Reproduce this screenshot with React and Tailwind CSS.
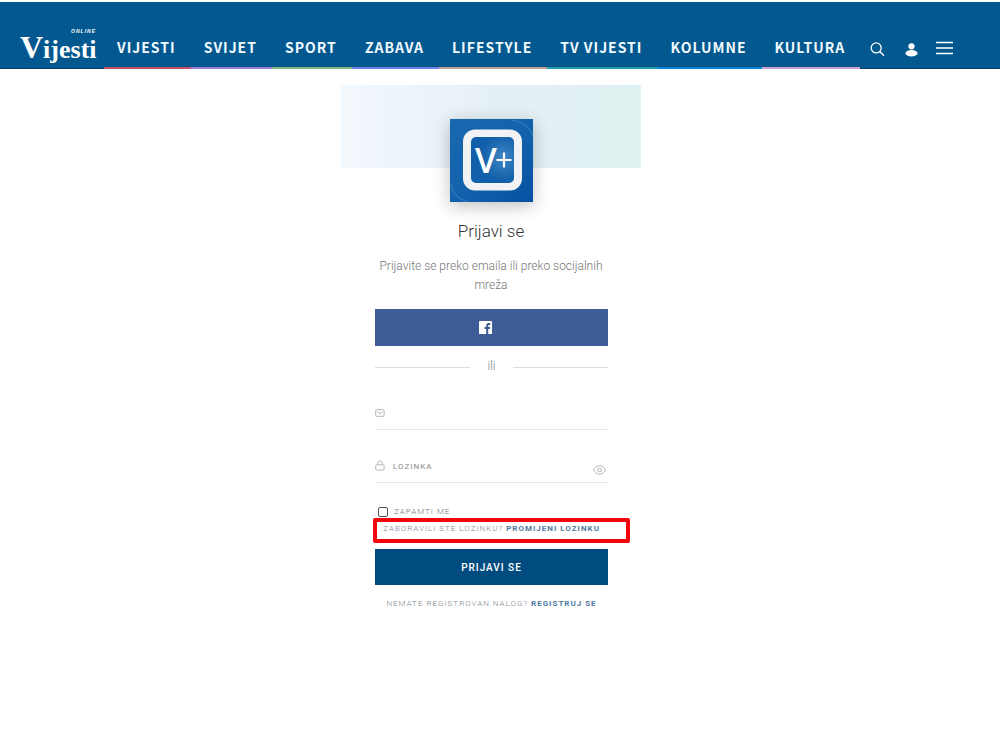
import React, { useState } from "react";

const navItems = [
  { label: "VIJESTI", border: "border-[#c4506a]" },
  { label: "SVIJET", border: "border-[#9a80dc]" },
  { label: "SPORT", border: "border-[#86b88c]" },
  { label: "ZABAVA", border: "border-[#6f80ea]" },
  { label: "LIFESTYLE", border: "border-[#c09c9a]" },
  { label: "TV VIJESTI", border: "border-[#1fa0b0]" },
  { label: "KOLUMNE", border: "border-[#0a84dc]" },
  { label: "KULTURA", border: "border-[#c99fd6]" },
];

const Logo = () => (
  <a
    href="#"
    aria-label="Vijesti online"
    className="relative ml-5 block h-[42px] w-[84px] shrink-0 font-['Liberation_Serif',serif] font-bold text-white"
  >
    <span className="block text-[26px] leading-[42px] first-letter:text-[32px]">Vijesti</span>
    <span className="absolute top-0.5 right-2 font-['Liberation_Sans',sans-serif] text-[5px] leading-[6px] tracking-[1px] italic">
      ONLINE
    </span>
  </a>
);

const Header = () => (
  <header className="mt-0.5 flex items-end border-b border-[#063f73] bg-[#03588f] pt-6">
    <Logo />
    <nav className="-mb-px flex">
      {navItems.map((item) => (
        <a
          key={item.label}
          href="#"
          className={`border-b-2 pt-2 pr-[15px] pb-[9px] pl-[13px] font-['Noto_Sans_CJK_JP',sans-serif] text-[14px] leading-[22px] font-bold tracking-[1px] whitespace-nowrap text-[#f0faff] ${item.border}`}
        >
          {item.label}
        </a>
      ))}
    </nav>
    <div className="mb-2.5 ml-2 flex items-center text-white">
      <button type="button" aria-label="Pretraga">
        <svg width="18" height="18" viewBox="0 0 18 18" fill="none" stroke="currentColor" strokeWidth="1.3">
          <circle cx="8.2" cy="7.9" r="5" />
          <path d="M11.8 11.5L16 15.7" />
        </svg>
      </button>
      <button type="button" aria-label="Profil" className="ml-4">
        <svg width="18" height="18" viewBox="0 0 18 18" fill="currentColor">
          <circle cx="9.5" cy="6.3" r="3.1" />
          <ellipse cx="9.5" cy="13.3" rx="6" ry="3.2" />
        </svg>
      </button>
      <button type="button" aria-label="Meni" className="ml-4">
        <svg width="18" height="18" viewBox="0 0 18 18" stroke="currentColor" strokeWidth="1.3">
          <path d="M0 2.5H17M0 8H17M0 13.5H17" />
        </svg>
      </button>
    </div>
  </header>
);

const AppBadge = () => (
  <svg
    viewBox="0 0 83 83"
    className="mx-auto -mt-[49px] block w-[83px] shadow-[0_4px_16px_rgba(0,0,0,0.25)]"
    role="img"
    aria-label="V+"
  >
    <defs>
      <linearGradient id="badge" x1="0" y1="0" x2="1" y2="1">
        <stop offset="0" stopColor="#1a69b0" />
        <stop offset="0.55" stopColor="#1161ac" />
        <stop offset="1" stopColor="#0650a2" />
      </linearGradient>
      <radialGradient id="glow" cx="0.75" cy="0.45" r="0.5">
        <stop offset="0" stopColor="#3f87c6" />
        <stop offset="1" stopColor="#1260aa" />
      </radialGradient>
    </defs>
    <rect width="83" height="83" fill="url(#badge)" />
    <path d="M62 1C73 3 81 9 83 17M1 65C3 76 10 81 19 83" fill="none" stroke="#4d8fc8" strokeWidth="0.7" />
    <rect x="13" y="10.5" width="59" height="61" rx="12" fill="#f0f2f4" />
    <rect x="21" y="18" width="43" height="46" rx="5" fill="url(#glow)" />
    <text x="25" y="54" fill="#fff" fontSize="35" className="font-['Open_Sans',sans-serif] font-semibold">
      V
    </text>
    <path d="M46.5 41H61.5M54 33.5V48.5" stroke="#fff" strokeWidth="2.2" />
  </svg>
);

const LoginForm = () => {
  const [showPassword, setShowPassword] = useState(false);

  return (
    <form className="pr-[33px] pl-[34px]" onSubmit={(e) => e.preventDefault()}>
      <button
        type="button"
        aria-label="Facebook"
        className="flex h-[37px] w-full items-center justify-center bg-[#3e5c96] pr-3"
      >
        <svg width="13" height="13" viewBox="0 0 13 13">
          <rect width="13" height="13" rx="0.6" fill="#fff" />
          <path
            d="M7.2 13V8H5.6V6.1H7.2V4.7C7.2 3 8.2 2.1 9.7 2.1H11.3V3.9H10.2C9.4 3.9 9.2 4.2 9.2 4.9V6.1H11.2L10.9 8H9.2V13Z"
            fill="#3e5c96"
          />
        </svg>
      </button>

      <div className="mt-3 flex items-center text-[12px] leading-4 text-[#888]">
        <span className="mt-0.5 h-px flex-1 bg-[#dcdfe1]" />
        <span className="w-[43px] text-center font-light">ili</span>
        <span className="mt-0.5 h-px flex-1 bg-[#dcdfe1]" />
      </div>

      <div className="mt-[22px] flex h-[34px] items-center border-b border-[#e6e6e6]">
        <label htmlFor="email" aria-label="Email" className="text-[#b5b5b5]">
          <svg width="10" height="10" viewBox="0 0 10 10" fill="none" stroke="currentColor">
            <rect x="0.7" y="1.7" width="8.4" height="6.6" rx="0.8" />
            <path d="M2.2 3.8L4.9 5.7L7.6 3.8" />
          </svg>
        </label>
        <input id="email" type="email" className="ml-2 h-7 min-w-0 flex-1 text-[12px] outline-none" />
      </div>

      <div className="mt-[19px] flex h-[34px] items-center border-b border-[#e6e6e6]">
        <label htmlFor="password" aria-label="Lozinka" className="text-[#b5b5b5]">
          <svg width="10" height="11" viewBox="0 0 10 11" fill="none" stroke="currentColor">
            <rect x="0.7" y="4.8" width="8.4" height="5.2" rx="0.8" />
            <path d="M2.6 4.8V3C2.6 0.2 7.2 0.2 7.2 3V4.8" />
          </svg>
        </label>
        <input
          id="password"
          type={showPassword ? "text" : "password"}
          placeholder="LOZINKA"
          className="ml-2 h-7 min-w-0 flex-1 pt-0.5 text-[8px] tracking-[1px] outline-none placeholder:text-[#888]"
        />
        <button
          type="button"
          aria-label="Prikaži lozinku"
          className="mt-2 mr-0.5 text-[#b8b8b8]"
          onClick={() => setShowPassword(!showPassword)}
        >
          <svg width="13" height="10" viewBox="0 0 13 10" fill="none" stroke="currentColor">
            <path d="M0.6 5C2.6 -0.7 10.4 -0.7 12.4 5C10.4 10.7 2.6 10.7 0.6 5Z" />
            <circle cx="6.5" cy="5" r="1.9" />
          </svg>
        </button>
      </div>

      <label className="mt-[22px] flex items-center gap-1.5 pl-[3px] text-[8px] leading-[14px] font-light tracking-[1px] text-[#777]">
        <input type="checkbox" className="size-[10px] appearance-none rounded-[2px] border border-[#555] checked:bg-[#004c80]" />
        ZAPAMTI ME
      </label>

      <p className="relative mt-1 text-center text-[8px] leading-3 font-light tracking-[1px] whitespace-nowrap text-[#7c8690]">
        ZABORAVILI STE LOZINKU?{" "}
        <a href="#" className="font-bold text-[#4f7a9d]">
          PROMIJENI LOZINKU
        </a>
        <span className="pointer-events-none absolute -top-[5px] -right-[22px] -bottom-2 -left-0.5 rounded-[2px] border-4 border-[#f4040c]" />
      </p>

      <button
        type="submit"
        className="mt-3.5 block h-9 w-full bg-[#004c80] text-[10px] font-medium tracking-[1px] text-white"
      >
        PRIJAVI SE
      </button>

      <p className="mt-[13px] text-center text-[8px] leading-3 font-light tracking-[1px] whitespace-nowrap text-[#7c8690]">
        NEMATE REGISTROVAN NALOG?{" "}
        <a href="#" className="font-bold text-[#4f7a9d]">
          REGISTRUJ SE
        </a>
      </p>
    </form>
  );
};

const App = () => {
  return (
    <div className="min-h-screen overflow-x-hidden bg-white font-[Roboto,sans-serif]">
      <Header />
      <main className="pt-4 pr-[18px]">
        <div className="mx-auto w-full max-w-[300px]">
          <div className="h-[83px] bg-linear-to-r from-[#f3f8fd] via-[#e5f0f5] to-[#dff1f1]" />
          <AppBadge />
          <h1 className="mt-[17px] text-center text-[17px] leading-6 font-light text-[#333]">
            Prijavi se
          </h1>
          <p className="mt-3.5 mb-3.5 px-[30px] text-center text-[12px] leading-[19px] font-light text-[#777]">
            Prijavite se preko emaila ili preko socijalnih mreža
          </p>
          <LoginForm />
        </div>
      </main>
    </div>
  );
};

export default App;
